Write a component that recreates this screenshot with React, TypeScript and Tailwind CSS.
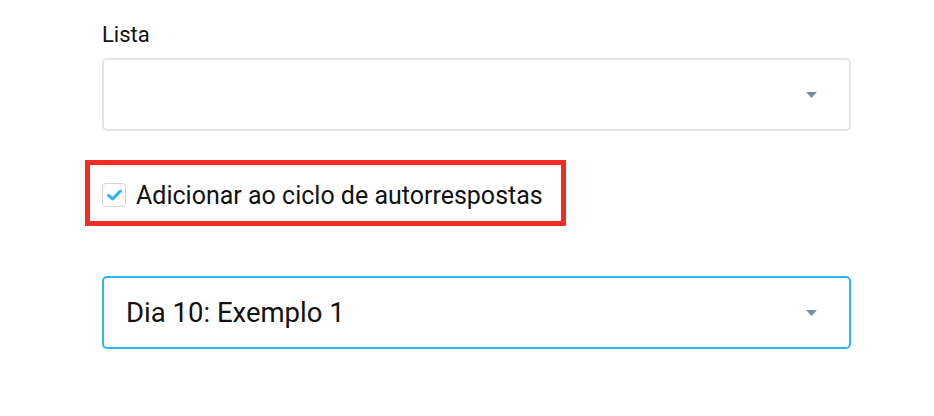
export default function App() {
  return (
    <div className="min-h-[416px] w-[934px] bg-white font-['Roboto',sans-serif] text-[#111]">
      <div className="w-[749px] ml-[102px] pt-[22px]">
        <label className="block text-[22px] leading-[26px]">Lista</label>
        <SelectBox value="" className="mt-[10px] border-2 border-[#e4e4e4]" />

        <div className="mt-[29px] -ml-[17px] inline-flex items-center h-[66px] w-[481px] border-[5px] border-[#f22c22] pl-[12px]">
          <span className="flex items-center justify-center w-[24px] h-[24px] rounded-[4px] border-[1.5px] border-[#d4d4d4] bg-white mt-[4px]">
            <svg width="15" height="12" viewBox="0 0 15 12" fill="none">
              <path d="M1.6 6.4 L5.6 10 L13.4 2" stroke="#29b6f6" strokeWidth="3" strokeLinecap="round" strokeLinejoin="round" />
            </svg>
          </span>
          <span className="ml-[10px] text-[25px] leading-[30px] mt-[5px]">Adicionar ao ciclo de autorrespostas</span>
        </div>

        <SelectBox value="Dia 10: Exemplo 1" className="mt-[50px] border-2 border-[#29b6f6]" />
      </div>
    </div>
  );
}

function SelectBox({ value, className }: { value: string; className: string }) {
  return (
    <div className={`flex items-center justify-between h-[73px] rounded-[5px] pl-[22px] pr-[32px] ${className}`}>
      <span className="text-[27.5px] leading-[32px] mt-[1px]">{value}</span>
      <svg width="11" height="6" viewBox="0 0 11 6">
        <path d="M0 0 H11 L5.5 6 Z" fill="#78909c" />
      </svg>
    </div>
  );
}
